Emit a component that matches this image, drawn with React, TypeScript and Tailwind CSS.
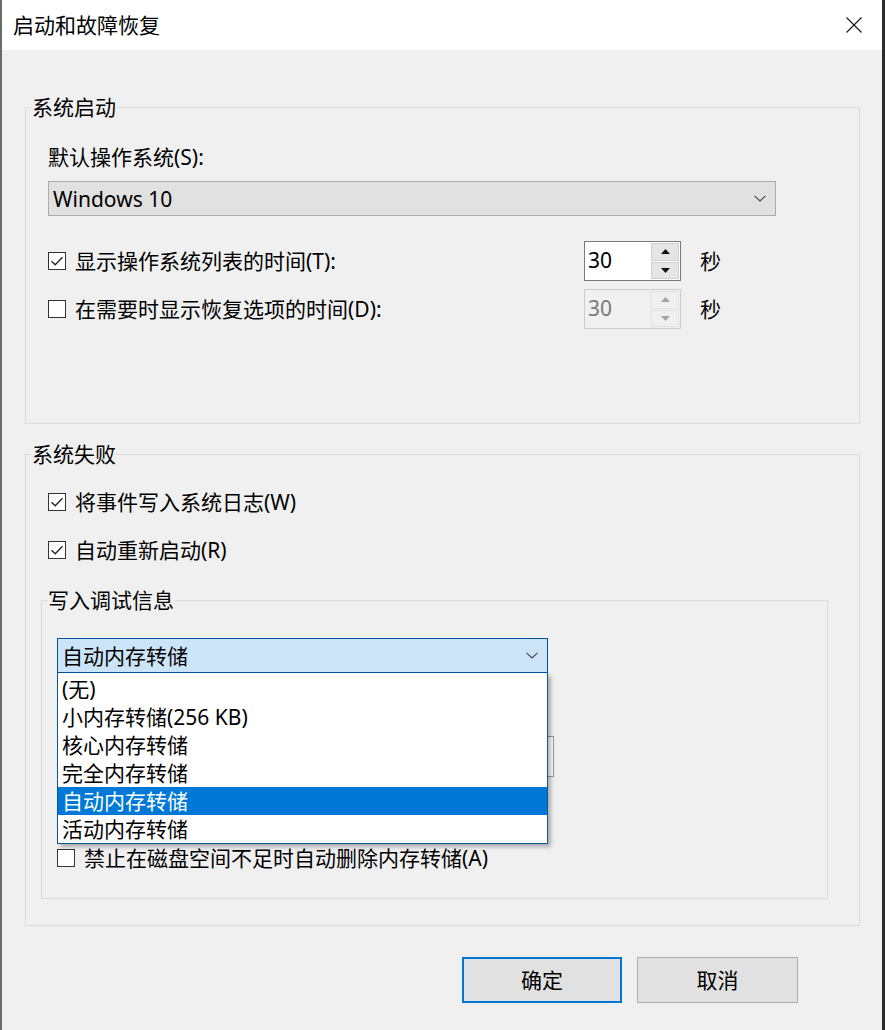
import type { ReactNode } from "react";

const dumpTypes = ["(无)", "小内存转储(256 KB)", "核心内存转储", "完全内存转储", "自动内存转储", "活动内存转储"];

export default function App() {
  return (
    <div className="box-border flex h-[1030px] w-[885px] flex-col border-l-2 border-r-[3px] border-l-[#6b6b6b] border-r-[#2b2b2b] bg-[#f0f0f0] font-['Noto_Sans','Noto_Sans_CJK_SC',sans-serif] text-[21px] text-black">
      {/* title bar */}
      <div className="flex h-[50px] shrink-0 items-center justify-between bg-white pl-[11px] pr-[20px]">
        <span className="leading-[24px]">启动和故障恢复</span>
        <svg width="16" height="16" viewBox="0 0 16 16" fill="none">
          <path d="M0.5 0.5 L15.5 15.5 M15.5 0.5 L0.5 15.5" stroke="#111" strokeWidth="1.1" />
        </svg>
      </div>

      <div className="flex flex-col pl-[23px] pt-[45px]">
        <GroupBox title="系统启动" className="w-[835px]">
          <div className="flex flex-col pb-[94px] pl-[22px]">
            <div className="mt-[26px] leading-[24px]">默认操作系统(S):</div>
            <div className="mt-[12px] flex h-[35px] w-[728px] items-center justify-between border border-[#adadad] bg-[#e1e1e1] pl-[4px] pr-[9px]">
              <span className="leading-[24px]">Windows 10</span>
              <Chevron />
            </div>
            <div className="mt-[25px] grid h-[40px] grid-cols-[536px_97px_auto] items-center">
              <CheckRow checked label="显示操作系统列表的时间(T):" />
              <Spinner value="30" />
              <span className="ml-[19px] leading-[24px]">秒</span>
            </div>
            <div className="mt-[8px] grid h-[40px] grid-cols-[536px_97px_auto] items-center">
              <CheckRow label="在需要时显示恢复选项的时间(D):" />
              <Spinner value="30" disabled />
              <span className="ml-[19px] leading-[24px]">秒</span>
            </div>
          </div>
        </GroupBox>

        <GroupBox title="系统失败" className="mt-[18px] w-[835px]">
          <div className="flex flex-col pb-[26px] pl-[15px]">
            <div className="ml-[7px] mt-[24px]">
              <CheckRow checked label="将事件写入系统日志(W)" />
            </div>
            <div className="ml-[7px] mt-[24px]">
              <CheckRow checked label="自动重新启动(R)" />
            </div>

            <GroupBox title="写入调试信息" className="mt-[26px] w-[787px]">
              <div className="flex flex-col pb-[28px] pl-[15px]">
                <div className="relative mt-[26px] w-[491px]">
                  <div className="flex h-[35px] items-center justify-between border border-[#005499] bg-[#cce4f7] pl-[4px] pr-[9px]">
                    <span className="leading-[24px]">自动内存转储</span>
                    <Chevron />
                  </div>
                  {/* open drop-down list */}
                  <ul className="absolute left-0 top-full z-10 w-full border border-t-0 border-[#0b5a8f] bg-white pt-[2px] shadow-[3px_3px_4px_rgba(0,0,0,0.28)]">
                    {dumpTypes.map((item, i) => (
                      <li
                        key={item}
                        className={`flex h-[28px] items-center pl-[4px] leading-[24px] ${i === 4 ? "bg-[#0078d7] text-white" : ""}`}
                      >
                        {item}
                      </li>
                    ))}
                  </ul>
                </div>
                {/* dump file box, mostly under the list */}
                <div className="mt-[63px] h-[41px] w-[497px] border border-[#999999] bg-white" />
                <div className="mt-[69px]">
                  <CheckRow label="禁止在磁盘空间不足时自动删除内存转储(A)" />
                </div>
              </div>
            </GroupBox>
          </div>
        </GroupBox>

        <div className="mt-[31px] flex justify-end gap-[15px] pr-[84px]">
          <button className="flex h-[46px] w-[160px] items-center justify-center border-2 border-[#0078d7] bg-[#e1e1e1] leading-[24px]">
            确定
          </button>
          <button className="flex h-[46px] w-[161px] items-center justify-center border border-[#adadad] bg-[#e1e1e1] leading-[24px]">
            取消
          </button>
        </div>
      </div>
    </div>
  );
}

function GroupBox({ title, className, children }: { title: string; className?: string; children: ReactNode }) {
  return (
    <fieldset className={`border border-[#dcdcdc] ${className ?? ""}`}>
      <legend className="ml-[5px] px-[1px] leading-[24px]">{title}</legend>
      {children}
    </fieldset>
  );
}

function CheckRow({ checked, label }: { checked?: boolean; label: string }) {
  return (
    <div className="flex h-[24px] items-center gap-[9px]">
      <span className="grid h-[18px] w-[18px] shrink-0 place-items-center border border-[#333333] bg-white">
        {checked ? (
          <svg width="14" height="14" viewBox="0 0 14 14" fill="none">
            <path d="M1.5 7.2 L5.2 10.8 L12.5 3.2" stroke="#222" strokeWidth="1.3" />
          </svg>
        ) : null}
      </span>
      <span className="whitespace-nowrap leading-[24px]">{label}</span>
    </div>
  );
}

function Chevron() {
  return (
    <svg width="12" height="7" viewBox="0 0 12 7" fill="none">
      <path d="M0.5 0.8 L6 6 L11.5 0.8" stroke="#444" strokeWidth="1.1" />
    </svg>
  );
}

function Spinner({ value, disabled }: { value: string; disabled?: boolean }) {
  const arrow = disabled ? "#a3a3a3" : "#111";
  return (
    <div
      className={`flex h-[40px] w-[97px] border ${
        disabled ? "border-[#cccccc] bg-[#f0f0f0] text-[#7a7a7a]" : "border-[#7a7a7a] bg-white text-black"
      }`}
    >
      <span className="flex-1 pl-[3px] leading-[36px]">{value}</span>
      <div className="flex w-[30px] flex-col gap-[1px] p-[1px]">
        {[true, false].map((up) => (
          <div
            key={String(up)}
            className={`flex flex-1 items-center justify-center border ${
              disabled ? "border-[#e3e3e3] bg-[#f0f0f0]" : "border-[#d0d0d0] bg-[#e5e5e5]"
            }`}
          >
            <svg width="9" height="5" viewBox="0 0 9 5">
              <path d={up ? "M4.5 0 L9 5 L0 5 Z" : "M0 0 L9 0 L4.5 5 Z"} fill={arrow} />
            </svg>
          </div>
        ))}
      </div>
    </div>
  );
}
